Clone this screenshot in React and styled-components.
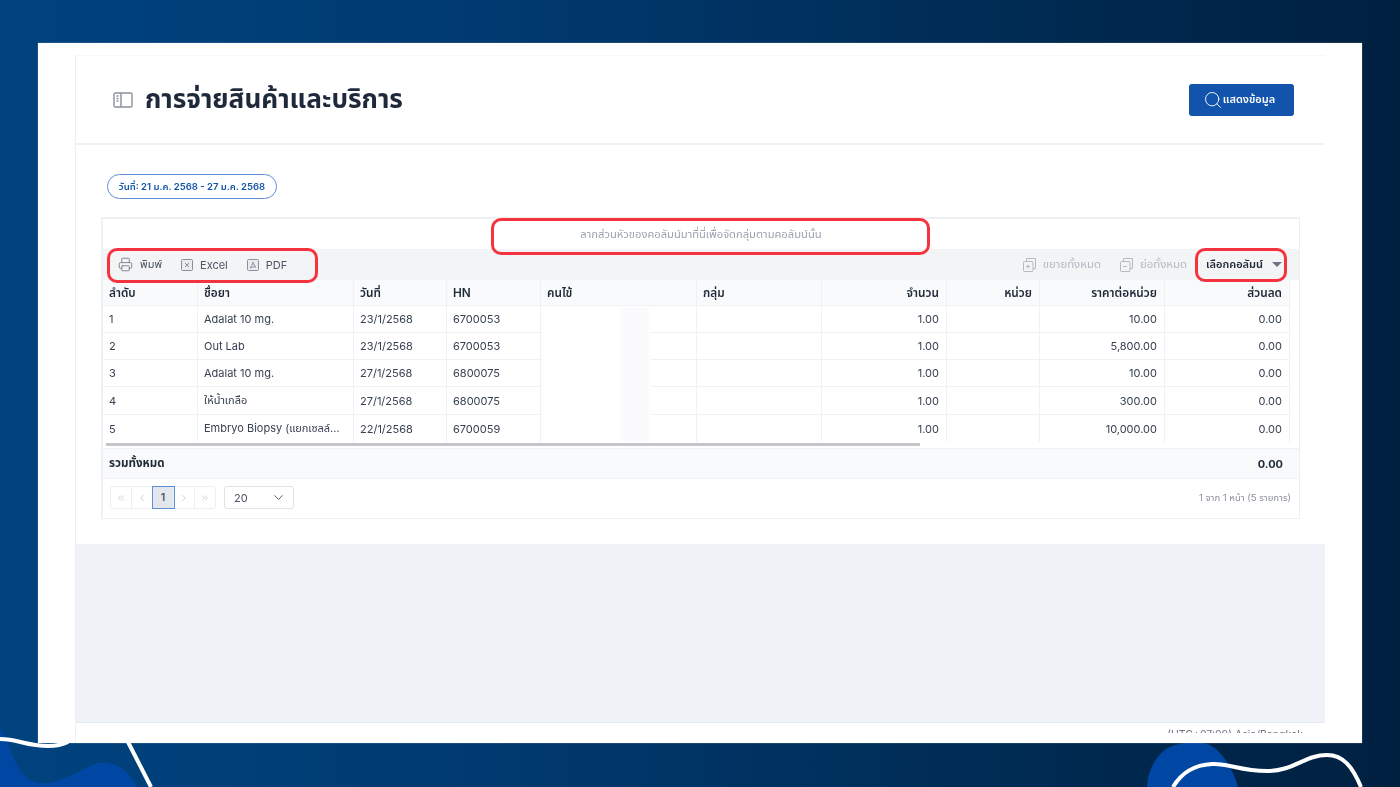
import React from 'react';
import styled, { createGlobalStyle } from 'styled-components';
import { Printer, Search, ChevronDown, ChevronLeft, ChevronRight, ChevronsLeft, ChevronsRight } from 'lucide-react';

const GlobalStyle = createGlobalStyle`
    html, body {
        margin: 0;
        padding: 0;
        width: 1400px;
        height: 787px;
        overflow: hidden;
    }
    * {
        box-sizing: border-box;
    }
`;

const columns = '95px 156px 93px 94px 156px 125px 125px 93px 125px 125px';

const Slide = styled.div`
    position: relative;
    width: 1400px;
    height: 787px;
    padding: 43px 38px 44px 38px;
    background: linear-gradient(90deg, #00437f 0%, #003a70 35%, #002c55 70%, #002040 100%);
    overflow: hidden;
    font-family: Inter, "Noto Sans Thai", "Noto Sans", sans-serif;
`;

const Decor = styled.svg`
    position: absolute;
    left: 0;
    top: 0;
`;

const Sheet = styled.div`
    position: relative;
    height: 700px;
    padding: 12px 37px 0 37px;
    background: #fff;
    overflow: hidden;
    box-shadow: 0 0 1px rgba(255, 255, 255, 0.6);
`;

/* the reference is a scaled-up screenshot, so everything in it is a bit soft */
const Page = styled.div`
    height: 100%;
    border-left: 1px solid #eef0f3;
    border-top: 1px solid #f6f7f9;
    filter: blur(0.35px);
`;

const Header = styled.div`
    height: 89px;
    display: flex;
    align-items: center;
    justify-content: space-between;
    padding: 0 31px 0 37px;
    border-bottom: 2px solid #f0f2f5;
`;

const TitleGroup = styled.div`
    display: flex;
    align-items: center;
    gap: 12px;
`;

const Title = styled.h1`
    margin: 0;
    font-size: 26.2px;
    font-weight: 700;
    color: #1e293b;
`;

const ShowButton = styled.button`
    width: 105px;
    height: 32px;
    display: flex;
    align-items: center;
    justify-content: center;
    padding: 0 5px 0 0;
    border: 0;
    border-radius: 3px;
    background: #1254ab;
    color: #fff;
    font-family: inherit;
    font-size: 11px;
    font-weight: 600;
`;

const Content = styled.div`
    height: 399px;
    padding: 29px 25px 0 25px;
`;

const DatePill = styled.div`
    width: 170px;
    height: 25px;
    margin-left: 6px;
    display: flex;
    align-items: center;
    justify-content: center;
    border: 1px solid #5f8fd6;
    border-radius: 13px;
    color: #1254ab;
    font-size: 9.5px;
    font-weight: 600;
`;

const Grid = styled.div`
    position: relative;
    width: 1199px;
    margin-top: 18px;
    border: 1px solid #eef0f3;
    border-top-width: 2px;
    border-left-width: 2px;
`;

const GroupPanel = styled.div`
    height: 30px;
    display: flex;
    align-items: center;
    justify-content: center;
    color: #9ca3af;
    font-size: 11.2px;
`;

const Toolbar = styled.div`
    height: 31px;
    display: flex;
    align-items: center;
    justify-content: space-between;
    padding: 0 17px 0 15px;
    background: #f3f4f6;
`;

const ToolGroup = styled.div`
    display: flex;
    align-items: center;
    gap: ${(props) => props.$gap}px;
`;

const Tool = styled.span`
    display: flex;
    align-items: center;
    gap: 7px;
    font-size: ${(props) => (props.$disabled ? 11.4 : 11)}px;
    color: ${(props) => (props.$disabled ? '#b4b9c2' : '#4b5563')};
`;

const ColumnPicker = styled.span`
    display: flex;
    align-items: center;
    gap: 9px;
    font-size: 11px;
    font-weight: 600;
    color: #1f2937;
`;

const Caret = styled.i`
    width: 0;
    height: 0;
    border-left: 5px solid transparent;
    border-right: 5px solid transparent;
    border-top: 5px solid #6b7280;
`;

const Row = styled.div`
    width: 1187px;
    display: grid;
    grid-template-columns: ${columns};
    height: ${(props) => props.$height}px;
    background: ${(props) => (props.$head ? '#f9fafb' : '#fff')};
    border-bottom: ${(props) => (props.$last ? '0' : '1px solid #eff1f4')};
`;

const Cell = styled.div`
    display: flex;
    align-items: center;
    justify-content: ${(props) => (props.$right ? 'flex-end' : 'flex-start')};
    padding: 0 7px 0 6px;
    border-right: 1px solid #eff1f4;
    font-size: ${(props) => (props.$head ? 11.8 : 11)}px;
    font-weight: ${(props) => (props.$head ? 600 : 400)};
    color: ${(props) => (props.$head ? '#1f2937' : '#374151')};
    white-space: nowrap;
    overflow: hidden;
`;

const ScrollTrack = styled.div`
    height: 7px;
    padding: 1px 0 0 3px;
    border-bottom: 1px solid #eff1f4;
`;

const ScrollThumb = styled.div`
    width: 814px;
    height: 3px;
    background: #c4c6ca;
`;

const TotalRow = styled.div`
    height: 30px;
    display: flex;
    align-items: center;
    justify-content: space-between;
    padding: 0 16px 0 6px;
    background: #f9fafb;
    border-bottom: 1px solid #eff1f4;
    color: #1f2937;
    font-size: 11px;
    font-weight: 700;
`;

const TotalLabel = styled.span`
    font-size: 11.6px;
`;

const Pager = styled.div`
    height: 39px;
    display: flex;
    align-items: center;
    justify-content: space-between;
    padding: 0 8px 2px 7px;
`;

const PagerLeft = styled.div`
    display: flex;
    align-items: center;
    gap: 8px;
`;

const PageButtons = styled.div`
    display: flex;
    width: 106px;
    height: 23px;
    border: 1px solid #eceef1;
    border-radius: 3px;
`;

const PageButton = styled.span`
    flex: 1;
    display: flex;
    align-items: center;
    justify-content: center;
    color: ${(props) => (props.$active ? '#4b5563' : '#c6cad1')};
    font-size: 10.5px;
    font-weight: 600;
    border-right: 1px solid #eceef1;
    background: ${(props) => (props.$active ? '#e3e6ec' : 'transparent')};
    outline: ${(props) => (props.$active ? '1px solid #5f8fd6' : 'none')};

    &:last-child {
        border-right: 0;
    }
`;

const PageSize = styled.div`
    width: 70px;
    height: 23px;
    display: flex;
    align-items: center;
    justify-content: space-between;
    padding: 0 7px 0 9px;
    border: 1px solid #dfe2e7;
    border-radius: 3px;
    color: #4b5563;
    font-size: 11px;
`;

const PageInfo = styled.span`
    color: #8b919b;
    font-size: 9.5px;
`;

const Callout = styled.div`
    position: absolute;
    left: ${(props) => props.$left}px;
    top: ${(props) => props.$top}px;
    width: ${(props) => props.$width}px;
    height: ${(props) => props.$height}px;
    border: 3px solid #f5333f;
    border-radius: 10px;
`;

const RedactPatch = styled.div`
    position: absolute;
    left: 439px;
    top: 89px;
    width: 109px;
    height: 133px;
    background: linear-gradient(90deg, #fff 70%, #fbfbfe 74%, #fbfbfe 97%, #fff 100%);
`;

const Blank = styled.div`
    height: 179px;
    background: #eff2f6;
    border-bottom: 1px solid #e6e9ee;
`;

/* only the top of this line is visible in the reference, the slide cuts it off */
const FooterBar = styled.div`
    height: 10px;
    padding: 5px 22px 0 0;
    overflow: hidden;
    text-align: right;
    color: #6b7280;
    font-size: 10.5px;
`;

const IconSvg = styled.svg`
    flex: none;
`;

const PanelIcon = () => (
    <IconSvg width="20" height="16" viewBox="0 0 20 16" fill="none" stroke="#8a919c" strokeWidth="1.4">
        <rect x="1" y="1" width="18" height="14" rx="1.5" />
        <path d="M8 1v14M3.500 4h2M3.500 6.500h2M3.500 9h2" />
    </IconSvg>
);

const FileIcon = ({ kind }) => (
    <IconSvg width="12" height="12" viewBox="0 0 12 12" fill="none" stroke="#8a919c" strokeWidth="1">
        <rect x="0.500" y="0.500" width="11" height="11" rx="1" fill="#e9ebee" />
        {kind === 'excel' ? (
            <path d="M4 4l4 4M8 4l-4 4" />
        ) : (
            <path d="M6 3c-.4 2.200-1.400 4.400-3 6 2-1 4-1.400 6-1-1.400-.8-2.400-2.600-3-5z" />
        )}
    </IconSvg>
);

const StackIcon = ({ plus }) => (
    <IconSvg width="13" height="14" viewBox="0 0 13 14" fill="none" stroke="#b4b9c2" strokeWidth="1">
        <path d="M3.500 3V.5h9v10H10" />
        <rect x="0.500" y="3.500" width="9.500" height="10" rx="1" />
        <path d={plus ? 'M3 8.500h4M5 6.500v4' : 'M3 8.500h4'} />
    </IconSvg>
);

const HEAD = [
    { label: 'ลำดับ' },
    { label: 'ชื่อยา' },
    { label: 'วันที่' },
    { label: 'HN' },
    { label: 'คนไข้' },
    { label: 'กลุ่ม' },
    { label: 'จำนวน', right: true },
    { label: 'หน่วย', right: true },
    { label: 'ราคาต่อหน่วย', right: true },
    { label: 'ส่วนลด', right: true },
];

const ROWS = [
    { no: 1, name: 'Adalat 10 mg.', date: '23/1/2568', hn: '6700053', price: '10.00', height: 27 },
    { no: 2, name: 'Out Lab', date: '23/1/2568', hn: '6700053', price: '5,800.00', height: 27 },
    { no: 3, name: 'Adalat 10 mg.', date: '27/1/2568', hn: '6800075', price: '10.00', height: 27 },
    { no: 4, name: 'ให้น้ำเกลือ', date: '27/1/2568', hn: '6800075', price: '300.00', height: 28 },
    { no: 5, name: 'Embryo Biopsy (แยกเซลล์...', date: '22/1/2568', hn: '6700059', price: '10,000.00', height: 27 },
];

export default function App() {
    return (
        <>
            <GlobalStyle />
            <Slide>
                <Decor width="1400" height="787" viewBox="0 0 1400 787">
                    <path d="M0 728C10 743 14 770 30 780C50 790 72 774 97 763C112 760 128 768 137 787H0Z" fill="#0046a3" />
                    <path d="M1147 787C1148 770 1155 757 1166 749C1176 742 1205 738 1216 749C1226 758 1234 772 1238 787Z" fill="#0046a3" />
                    <path d="M0 739C18 739 26 746 48 746C58 746 62 745 68 742" fill="none" stroke="#fff" strokeWidth="4" />
                    <path d="M127 740L151 787" fill="none" stroke="#fff" strokeWidth="4" />
                    <path d="M1173 787C1182 772 1194 765 1212 764C1228 763 1240 771 1267 771C1294 771 1305 755 1327 755C1344 755 1353 768 1361 787" fill="none" stroke="#fff" strokeWidth="4" />
                </Decor>
                <Sheet>
                    <Page>
                        <Header>
                            <TitleGroup>
                                <PanelIcon />
                                <Title>การจ่ายสินค้าและบริการ</Title>
                            </TitleGroup>
                            <ShowButton>
                                <Search size={20} strokeWidth={1.1} />
                                แสดงข้อมูล
                            </ShowButton>
                        </Header>
                        <Content>
                            <DatePill>วันที่: 21 ม.ค. 2568 - 27 ม.ค. 2568</DatePill>
                            <Grid>
                                <GroupPanel>ลากส่วนหัวของคอลัมน์มาที่นี่เพื่อจัดกลุ่มตามคอลัมน์นั้น</GroupPanel>
                                <Toolbar>
                                    <ToolGroup $gap={19}>
                                        <Tool>
                                            <Printer size={15} strokeWidth={1.3} color="#6b7280" />
                                            พิมพ์
                                        </Tool>
                                        <Tool>
                                            <FileIcon kind="excel" />
                                            Excel
                                        </Tool>
                                        <Tool>
                                            <FileIcon kind="pdf" />
                                            PDF
                                        </Tool>
                                    </ToolGroup>
                                    <ToolGroup $gap={19}>
                                        <Tool $disabled>
                                            <StackIcon plus />
                                            ขยายทั้งหมด
                                        </Tool>
                                        <Tool $disabled>
                                            <StackIcon />
                                            ย่อทั้งหมด
                                        </Tool>
                                        <ColumnPicker>
                                            เลือกคอลัมน์
                                            <Caret />
                                        </ColumnPicker>
                                    </ToolGroup>
                                </Toolbar>
                                <Row $head $height={26}>
                                    {HEAD.map((h) => (
                                        <Cell $head $right={h.right} key={h.label}>
                                            {h.label}
                                        </Cell>
                                    ))}
                                </Row>
                                {ROWS.map((r) => (
                                    <Row $height={r.height} $last={r.no === 5} key={r.no}>
                                        <Cell>{r.no}</Cell>
                                        <Cell>{r.name}</Cell>
                                        <Cell>{r.date}</Cell>
                                        <Cell>{r.hn}</Cell>
                                        <Cell />
                                        <Cell />
                                        <Cell $right>1.00</Cell>
                                        <Cell />
                                        <Cell $right>{r.price}</Cell>
                                        <Cell $right>0.00</Cell>
                                    </Row>
                                ))}
                                <RedactPatch />
                                <ScrollTrack>
                                    <ScrollThumb />
                                </ScrollTrack>
                                <TotalRow>
                                    <TotalLabel>รวมทั้งหมด</TotalLabel>
                                    <span>0.00</span>
                                </TotalRow>
                                <Pager>
                                    <PagerLeft>
                                        <PageButtons>
                                            <PageButton><ChevronsLeft size={10} /></PageButton>
                                            <PageButton><ChevronLeft size={10} /></PageButton>
                                            <PageButton $active>1</PageButton>
                                            <PageButton><ChevronRight size={10} /></PageButton>
                                            <PageButton><ChevronsRight size={10} /></PageButton>
                                        </PageButtons>
                                        <PageSize>
                                            20
                                            <ChevronDown size={15} strokeWidth={1.5} />
                                        </PageSize>
                                    </PagerLeft>
                                    <PageInfo>1 จาก 1 หน้า (5 รายการ)</PageInfo>
                                </Pager>
                                <Callout $left={388} $top={-1} $width={439} $height={37} />
                                <Callout $left={4} $top={29} $width={211} $height={35} />
                                <Callout $left={1092} $top={29} $width={92} $height={34} />
                            </Grid>
                        </Content>
                        <Blank />
                        <FooterBar>(UTC+07:00) Asia/Bangkok</FooterBar>
                    </Page>
                </Sheet>
            </Slide>
        </>
    );
}
